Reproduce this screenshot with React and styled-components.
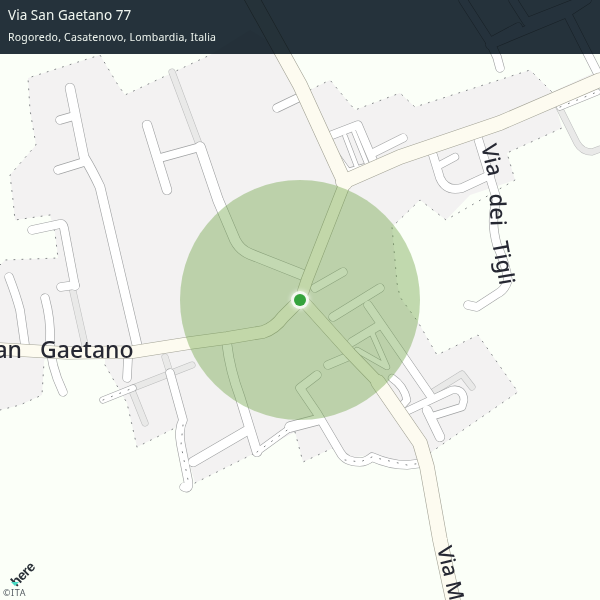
import styled, { createGlobalStyle } from 'styled-components';

const GlobalStyle = createGlobalStyle`
  html, body {
    margin: 0;
    padding: 0;
    background: #fbfff8;
  }
`;

const Page = styled.div`
  position: relative;
  width: 600px;
  height: 600px;
  overflow: hidden;
  background: #fbfff8;
  font-family: "Noto Sans", "Open Sans", sans-serif;
`;

const MapCanvas = styled.svg`
  display: block;
  width: 600px;
  height: 600px;
`;

const Land = styled.polygon`
  fill: #f3f2f2;
`;

const Boundary = styled.polyline`
  fill: none;
  stroke: #85888a;
  stroke-width: 1;
  stroke-dasharray: 1 7;
  stroke-linecap: round;
`;

const Stroke = styled.path`
  fill: none;
  stroke: ${p => p.$color};
  stroke-width: ${p => p.$w}px;
  stroke-linecap: round;
  stroke-linejoin: round;
`;

const Dots = styled.path`
  fill: none;
  stroke: #808385;
  stroke-width: 1;
  stroke-dasharray: 1 8;
  stroke-linecap: round;
`;

const Label = styled.text`
  fill: #262833;
  font-family: "Noto Sans", "Open Sans", sans-serif;
  font-size: ${p => p.$size}px;
  font-weight: 500;
  word-spacing: ${p => p.$gap || 0}px;
`;

const Header = styled.header`
  position: absolute;
  top: 0;
  left: 0;
  right: 0;
  height: 54px;
  box-sizing: border-box;
  padding: 6px 8px 0;
  background: #25323c;
  color: #f4f6f7;
  mix-blend-mode: multiply;
`;

const Title = styled.div`
  font-size: 13.5px;
  line-height: 19px;
  letter-spacing: 0.05px;
`;

const Subtitle = styled.div`
  margin-top: 5px;
  font-size: 10.5px;
  line-height: 14px;
  letter-spacing: 0.2px;
`;

const Radius = styled.div`
  position: absolute;
  left: 180px;
  top: 180px;
  width: 240px;
  height: 240px;
  border-radius: 50%;
  background: rgba(112, 165, 72, 0.42);
`;

const Marker = styled.div`
  position: absolute;
  left: 294px;
  top: 294px;
  width: 12px;
  height: 12px;
  border-radius: 50%;
  background: #35a33c;
  box-shadow: 0 0 0 3px #f4f8f0, 0 0 4px 4px rgba(255, 255, 255, 0.55);
`;

const Attribution = styled.div`
  position: absolute;
  left: 3px;
  bottom: 2px;
  display: flex;
  flex-direction: column;
  color: #555d63;
  font-size: 9px;
  line-height: 11px;
  letter-spacing: 0.6px;
`;

const Logo = styled.div`
  position: relative;
  width: 34px;
  height: 30px;
`;

const LogoWord = styled.span`
  position: absolute;
  left: 6px;
  top: 10px;
  font-family: "Liberation Sans", sans-serif;
  font-weight: 700;
  font-size: 14px;
  line-height: 14px;
  letter-spacing: -0.6px;
  color: #2a3138;
  transform: rotate(-45deg);
`;

const LogoMark = styled.span`
  position: absolute;
  left: 8px;
  top: 25px;
  width: 0;
  height: 0;
  border-left: 4px solid transparent;
  border-right: 4px solid transparent;
  border-top: 4px solid #48dac3;
`;

const areas = [
  '0,265 5,260 58,258 55,233 50,215 15,220 13,200 10,175 36,145 30,110 28,78 100,55 118,85 125,95 210,55 250,30 290,54 345,185 500,125 555,104 562,128 507,153 515,180 470,195 446,220 420,200 392,227 397,283 400,297 418,322 437,355 478,335 518,392 430,453 425,460 407,463 372,455 345,458 335,447 303,462 295,432 255,453 195,483 183,440 177,427 137,447 127,403 105,365 105,358 45,358 44,362 42,395 20,405 0,410',
  '310,90 330,80 355,110 400,93 415,107 530,70 552,92 600,70 600,85 500,125 400,160 345,185 330,150',
];

const boundaries = [
  '0,265 5,260 58,258 55,233 50,215 15,220 13,200 10,175 36,145 30,110 28,78 100,55 118,85 125,95 210,55',
  '0,410 20,405 42,395 44,362',
  '105,365 127,403 137,447 177,427',
  '195,483 255,453',
  '295,432 303,462 335,447',
  '430,453 518,392 478,335 437,355 418,322 400,297 397,283 392,227 420,200 446,220 515,180 507,153 562,128',
  '310,90 330,80 355,110 400,93 415,107 530,70 552,92',
];

// grey footways, under everything else
const footways = [
  'M172 72 L200 147',
  'M72 287 L85 345',
  'M133 388 L192 365',
  'M165 357 L170 373',
  'M133 393 L145 423',
  'M557 103 L577 143 Q582 152 592 152 L600 149',
  'M433 392 L462 374 L472 387',
];

const minorRoads = [
  { d: 'M70 88 L84 157 Q92 170 100 187 L137 345', w: 9 },
  { d: 'M60 120 L74 116', w: 8 },
  { d: 'M58 170 L84 162', w: 8 },
  { d: 'M147 125 L167 190', w: 9 },
  { d: 'M160 158 L200 147', w: 8 },
  { d: 'M200 147 L218 200 L235 240 Q240 250 250 254 L303 275', w: 10 },
  { d: 'M277 108 L302 96', w: 8 },
  { d: 'M32 230 L60 224 Q63 223 64 228 L75 286', w: 8 },
  { d: 'M61 287 L75 285', w: 8 },
  { d: 'M9 277 Q16 295 20 310 L25 345', w: 8 },
  { d: 'M45 298 Q51 320 50 340 Q50 365 63 392', w: 8 },
  { d: 'M128 358 L127 378', w: 8 },
  { d: 'M103 400 L133 388', w: 6 },
  { d: 'M170 373 L183 420 Q178 430 181 445 L188 480 Q190 490 184 487', w: 8 },
  { d: 'M227 345 Q230 370 240 397 L257 452', w: 9 },
  { d: 'M193 462 L248 430', w: 9 },
  { d: 'M257 452 L290 428', w: 6 },
  { d: 'M290 427 L317 420', w: 10 },
  { d: 'M317 375 L300 388 L317 413 L340 452 Q345 462 360 462 Q366 462 372 457 Q390 465 407 465 L423 463', w: 8 },
  { d: 'M343 272 L315 288', w: 8 },
  { d: 'M380 288 L333 317', w: 8 },
  { d: 'M368 305 L430 395', w: 8 },
  { d: 'M380 325 L352 342', w: 8 },
  { d: 'M328 365 L347 357', w: 8 },
  { d: 'M372 333 L387 367 L357 350', w: 5 },
  { d: 'M392 378 Q404 386 407 400 L398 410', w: 7 },
  { d: 'M403 413 L452 390 Q463 388 464 400 L462 407 L430 417', w: 7 },
  { d: 'M427 410 L440 437', w: 9 },
  { d: 'M332 135 L358 125 L375 165 L350 172', w: 8 },
  { d: 'M345 136 L358 170', w: 4 },
  { d: 'M354 132 L367 164', w: 4 },
  { d: 'M338 156 L348 170', w: 4 },
  { d: 'M375 152 L403 138', w: 8 },
  { d: 'M433 155 L440 178 Q446 192 462 188 L490 175', w: 8 },
  { d: 'M440 165 L455 157', w: 7 },
  { d: 'M477 135 L497 200 Q490 220 497 245 Q506 265 508 280 Q505 290 497 294 L477 307 L468 305', w: 8 },
  { d: 'M560 107 L597 92', w: 6 },
  { d: 'M463 0 L490 42 L497 57 L500 68', w: 8 },
  { d: 'M490 45 L567 13 L587 0', w: 8 },
  { d: 'M518 27 L490 42', w: 8 },
  { d: 'M513 0 L527 22 L583 0', w: 8 },
  { d: 'M567 13 L597 72', w: 8 },
];

const mainRoads = [
  { d: 'M0 349 L67 353 L133 352 L190 343 L227 338 L263 332 Q275 328 283 317 L300 300', w: 12 },
  { d: 'M305 303 L350 353 L378 382', w: 11 },
  { d: 'M378 382 L420 443 L427 467 L440 540 L453 600', w: 14 },
  { d: 'M303 292 L307 280 L345 183', w: 11 },
  { d: 'M250 -5 L300 85 L338 168 L345 183', w: 14 },
  { d: 'M343 182 L400 157 L500 123 L600 80', w: 14 },
];

const dotted = [
  'M103 400 L133 388',
  'M183 425 L181 445 L188 480',
  'M257 452 L290 428',
  'M345 460 L360 462 L372 457 L407 465 L423 463',
  'M560 107 L597 92',
];

const RoadLayer = ({ items, casing, fill }) => (
  <>
    {items.map(r => <Stroke key={r.d} d={r.d} $w={r.w + 1.2} $color={casing} />)}
    {items.map(r => <Stroke key={r.d} d={r.d} $w={r.w} $color={fill} />)}
  </>
);

const App = () => (
  <Page>
    <GlobalStyle />
    <MapCanvas viewBox="0 0 600 600">
      <defs>
        <path id="tigli" d="M481 146 L489 180 L490 205 L491 235 L500 287 L506 320" />
        <path id="monte" d="M437 548 L452 610" />
      </defs>

      {areas.map(a => <Land key={a} points={a} />)}
      {boundaries.map(b => <Boundary key={b} points={b} />)}

      {footways.map(d => <Stroke key={d} d={d} $w={7} $color="#bcbdbd" />)}
      {footways.map(d => <Stroke key={d} d={d} $w={6} $color="#e9e9e8" />)}

      <RoadLayer items={minorRoads} casing="#a0a2a3" fill="#ffffff" />
      {dotted.map(d => <Dots key={d} d={d} />)}
      <RoadLayer items={mainRoads} casing="#a3a396" fill="#fdfbf0" />

      <Label x="22" y="358" textAnchor="end" $size={23}>San</Label>
      <Label x="40" y="358" $size={23}>Gaetano</Label>
      <Label $size={22} $gap={11}>
        <textPath href="#tigli">Via dei Tigli</textPath>
      </Label>
      <Label $size={21}>
        <textPath href="#monte">Via M</textPath>
      </Label>
    </MapCanvas>

    <Radius />
    <Marker />

    <Header>
      <Title>Via San Gaetano 77</Title>
      <Subtitle>Rogoredo, Casatenovo, Lombardia, Italia</Subtitle>
    </Header>

    <Attribution>
      <Logo>
        <LogoWord>here</LogoWord>
        <LogoMark />
      </Logo>
      <span>©ITA</span>
    </Attribution>
  </Page>
);

export default App;
